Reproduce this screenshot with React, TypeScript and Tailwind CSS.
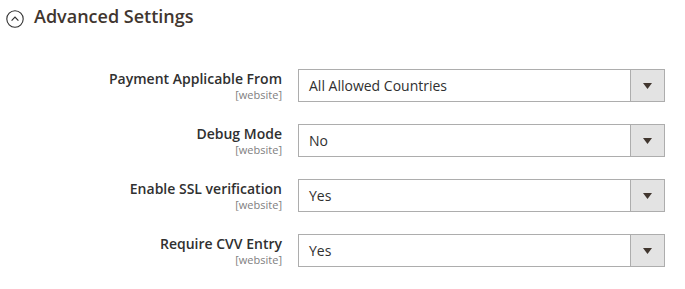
const rows = [
  { label: "Payment Applicable From", value: "All Allowed Countries" },
  { label: "Debug Mode", value: "No" },
  { label: "Enable SSL verification", value: "Yes" },
  { label: "Require CVV Entry", value: "Yes" },
];

function CollapseIcon() {
  return (
    <svg width="18" height="18" viewBox="0 0 18 18" fill="none">
      <circle cx="9" cy="9" r="8.2" stroke="#303030" strokeWidth="1.1" />
      <path d="M5.6 10.6 L9 7.2 L12.4 10.6" stroke="#303030" strokeWidth="1.2" />
    </svg>
  );
}

function SelectBox({ value }: { value: string }) {
  return (
    <div className="flex h-[33px] w-[367px] border border-[#adadad] bg-white">
      <div className="flex flex-1 items-center pl-[10px] text-[14px] text-[#303030]">
        {value}
      </div>
      <div className="flex w-[34px] items-center justify-center border-l border-[#adadad] bg-[#e3e3e3]">
        <svg width="9" height="6" viewBox="0 0 9 6">
          <path d="M0 0 H9 L4.5 6 Z" fill="#41362f" />
        </svg>
      </div>
    </div>
  );
}

export default function App() {
  return (
    <div
      className="h-[289px] w-[685px] bg-white"
      style={{ fontFamily: '"Open Sans", sans-serif' }}
    >
      <div className="flex items-start pl-[6px] pt-[4px]">
        <div className="mt-[6px]">
          <CollapseIcon />
        </div>
        <span className="ml-[10px] text-[18px] font-semibold leading-[24px] text-[#41362f]">
          Advanced Settings
        </span>
      </div>
      <div className="flex flex-col gap-[22px] pt-[41px]">
        {rows.map((r) => (
          <div key={r.label} className="flex items-start">
            <div className="flex w-[282px] flex-col items-end pt-[1px]">
              <span className="text-[14px] font-semibold leading-[18px] text-[#303030]">
                {r.label}
              </span>
              <span className="text-[11px] leading-[14px] text-[#808080]">[website]</span>
            </div>
            <div className="ml-[16px]">
              <SelectBox value={r.value} />
            </div>
          </div>
        ))}
      </div>
    </div>
  );
}
